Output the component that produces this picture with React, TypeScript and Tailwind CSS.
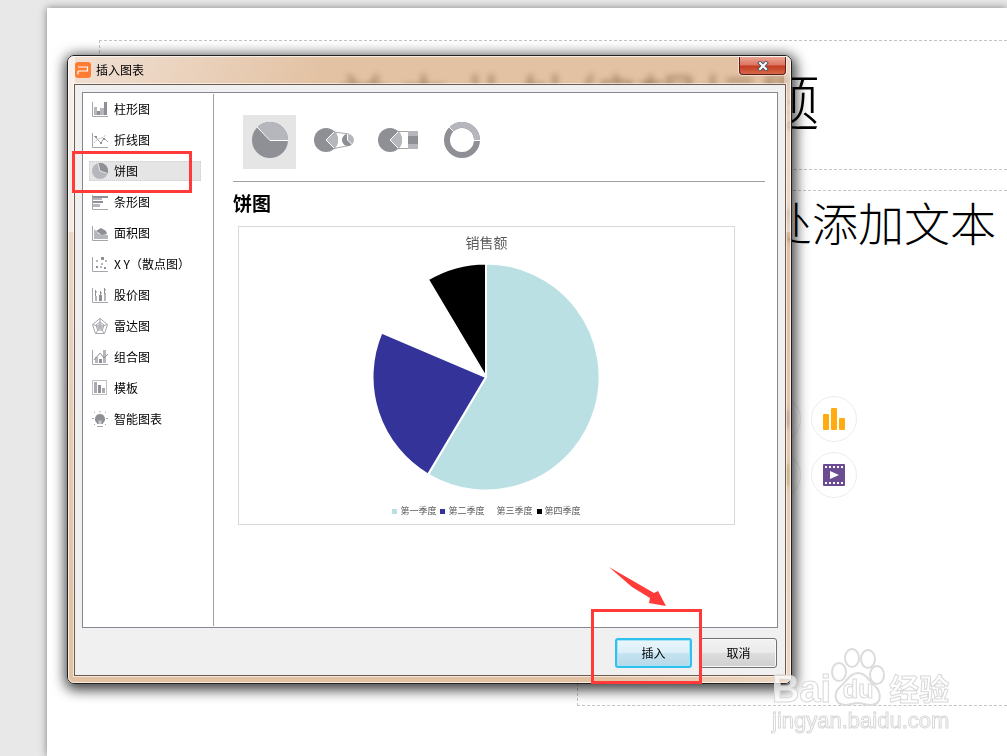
import React, { useState } from 'react';

const chartTypes = [
    { id: 'column', label: '柱形图' },
    { id: 'line', label: '折线图' },
    { id: 'pie', label: '饼图' },
    { id: 'bar', label: '条形图' },
    { id: 'area', label: '面积图' },
    { id: 'scatter', label: 'X Y（散点图）' },
    { id: 'stock', label: '股价图' },
    { id: 'radar', label: '雷达图' },
    { id: 'combo', label: '组合图' },
    { id: 'template', label: '模板' },
    { id: 'smart', label: '智能图表' },
];

const pieStyles = ['饼图', '复合饼图', '复合条饼图', '圆环图'];

const legend = [
    { name: '第一季度', color: 'bg-[#bbe0e3]' },
    { name: '第二季度', color: 'bg-[#333399]' },
    { name: '第三季度', color: 'bg-white' },
    { name: '第四季度', color: 'bg-black' },
];

const Axis = () => <path d="M.5 1v14.500H16" fill="none" stroke="#a5a6aa" />;

const TypeIcon = ({ id }: { id: string }) => (
    <svg width="16" height="16" viewBox="0 0 16 16" className="shrink-0" aria-hidden="true">
        {id === 'column' && (
            <>
                <path d="M2 6h3v8H2z" fill="#b6b7bc" />
                <path d="M5 10h3v4H5zM12 1h3v13h-3z" fill="#8f9095" />
                <path d="M8 7h4v7H8z" fill="#b6b7bc" />
                <Axis />
            </>
        )}
        {id === 'line' && (
            <>
                <path d="M2 4l7 7 3-5 4 4" fill="none" stroke="#a5a6aa" />
                <path d="M2 11l4-4 4-1 4-3" fill="none" stroke="#b6b7bc" strokeDasharray="2 1" />
                <path d="M8 10h2v2H8zM3 4h2v2H3zM11 6h2v2h-2z" fill="#8f9095" />
                <Axis />
            </>
        )}
        {id === 'pie' && (
            <>
                <circle cx="8" cy="8" r="8" fill="#b6b7bc" />
                <path d="M8 8L6 .2A8 8 0 0 1 15.500 11z" fill="#8f9095" />
                <path d="M6 .2L8 8l7.500 2.500" fill="none" stroke="#e6e6e6" />
            </>
        )}
        {id === 'bar' && (
            <>
                <path d="M1 2h15v2H1zM1 7h10v2H1z" fill="#8f9095" />
                <path d="M1 4h9v2H1zM1 10h7v3H1z" fill="#b6b7bc" />
                <Axis />
            </>
        )}
        {id === 'area' && (
            <>
                <path d="M2 4l5 5 9 1v4H2z" fill="#b6b7bc" />
                <path d="M4 6l5-3 5 3 1 3-5 1z" fill="#8f9095" />
                <Axis />
            </>
        )}
        {id === 'scatter' && (
            <>
                <path d="M9 1h3v3H9zM4 10h2v2H4zM12 11h2v2h-2z" fill="#8f9095" />
                <path d="M4 4h2v2H4zM13 4h2v2h-2zM9 7h2v2H9zM8 10h2v2H8z" fill="#b6b7bc" />
                <Axis />
            </>
        )}
        {id === 'stock' && (
            <>
                <path d="M3 9h2v5H3zM12 6h2v8h-2z" fill="#b6b7bc" />
                <path d="M7 8h3v6H7z" fill="#8f9095" />
                <path d="M3.500 3v6M8.500 4v4M12.500 1v6M3 5h2M8 6h2M12 3h2" stroke="#8f9095" />
                <Axis />
            </>
        )}
        {id === 'radar' && (
            <>
                <path d="M8 .5l7.500 6-3 9h-9l-3-9zM8 4l4 3-1.500 5h-5L4 7z" fill="none" stroke="#a5a6aa" />
                <path d="M8 0v9L1 6.500M8 9l7-2.500M8 9l4 6M8 9l-4 6" fill="none" stroke="#a5a6aa" />
                <path d="M8 5l3 3-1 3H6L5 8z" fill="#b6b7bc" />
            </>
        )}
        {id === 'combo' && (
            <>
                <path d="M3 8h3v6H3zM11 1h3v13h-3z" fill="#b6b7bc" />
                <path d="M7 10h3v4H7z" fill="#8f9095" />
                <path d="M2 11l6-7 4 5 4-4" fill="none" stroke="#8f9095" />
                <Axis />
            </>
        )}
        {id === 'template' && (
            <>
                <rect x=".5" y=".5" width="14" height="14" fill="none" stroke="#c0c1c5" />
                <path d="M2 2h3v11H2zM10 8h3v5h-3z" fill="#a9aaaf" />
                <path d="M6 5h3v8H6z" fill="#8f9095" />
            </>
        )}
        {id === 'smart' && (
            <>
                <path d="M8 3a5 5 0 0 1 3 9v1H5v-1a5 5 0 0 1 3-9z" fill="#8f9095" />
                <path d="M6.500 9l1.500 1 1.500-1v4h-3z" fill="#c9cace" />
                <path d="M5 15.500h6M8 0v1.500M2 1l1 1M14 1l-1 1M0 7.500h2M14 7.500h2M2 14l1-1M14 14l-1-1" stroke="#a5a6aa" />
            </>
        )}
    </svg>
);

const PieStyleIcon = ({ index }: { index: number }) => {
    if (index === 0) {
        return (
            <svg width="36" height="36" viewBox="0 0 36 36" aria-hidden="true">
                <circle cx="18" cy="18" r="18" fill="#8f9095" />
                <path d="M18 18L5.300 5.300A18 18 0 0 1 36 18z" fill="#b6b7bc" />
                <path d="M5 5l13 13.500h18" fill="none" stroke="#fff" />
            </svg>
        );
    }
    if (index === 3) {
        return (
            <svg width="36" height="36" viewBox="0 0 36 36" aria-hidden="true">
                <circle cx="18" cy="18" r="15" fill="none" stroke="#8f9095" strokeWidth="6" />
                <path d="M7.400 7.400A15 15 0 0 1 33 18" fill="none" stroke="#b6b7bc" strokeWidth="6" />
                <path d="M5 5l5 5M29 18.500h7" stroke="#fff" />
            </svg>
        );
    }
    return (
        <svg width="40" height="26" viewBox="0 0 40 26" aria-hidden="true">
            <circle cx="12" cy="13" r="12" fill="#8f9095" />
            <path d="M12 13l8.500-8.500a12 12 0 0 1 0 17z" fill="#b6b7bc" />
            <path d="M20 5l-8 8 8 8" fill="none" stroke="#fff" />
            {index === 1 ? (
                <>
                    <path d="M20 5l15 2M20 21.500l15-3" stroke="#a5a6aa" />
                    <circle cx="34" cy="13" r="6" fill="#b6b7bc" />
                    <path d="M33.500 7v6l4.500 4.500A6 6 0 1 1 33.500 7z" fill="#8f9095" />
                    <path d="M33.500 7v6l5 5" fill="none" stroke="#fff" />
                </>
            ) : (
                <>
                    <path d="M19 4.500h11M19 21.500h11" stroke="#a5a6aa" />
                    <path d="M30 4h10v18H30z" fill="#b6b7bc" />
                    <path d="M30 9h10v8H30z" fill="#8f9095" />
                </>
            )}
        </svg>
    );
};

const InsertIcon = ({ kind }: { kind: string }) => (
    <svg width="22" height="22" viewBox="0 0 22 22" aria-hidden="true">
        {kind === '图表' && (
            <>
                <rect x="0" y="6" width="6" height="16" rx="1" fill="#ffab12" />
                <rect x="8" y="0" width="6" height="22" rx="1" fill="#ffab12" />
                <rect x="16" y="10" width="6" height="12" rx="1" fill="#ffab12" />
            </>
        )}
        {kind === '视频' && (
            <>
                <rect width="22" height="22" rx="1" fill="#6b4c93" />
                <path d="M2 3h18M2 19h18" stroke="#fff" strokeWidth="2" strokeDasharray="2 2" />
                <path d="M7 7l9 4-9 4z" fill="#fff" />
            </>
        )}
        {kind === '表格' && <path d="M0 2h22v18H0z" fill="#8a86b0" />}
        {kind === '图片' && <path d="M0 0h22v22H0z" fill="#8fa860" />}
    </svg>
);

const PieChart = () => (
    <svg width="228" height="228" viewBox="-113 -114 228 228" role="img" aria-label="销售额">
        <g stroke="#fff" strokeWidth="2" strokeLinejoin="round">
            <path d="M0 0V-113.500A113.500 113.500 0 1 1 -58 97.500z" fill="#bbe0e3" />
            <path d="M0 0L-58 97.500A113.500 113.500 0 0 1 -104.500 -44.300z" fill="#333399" />
            <path d="M0 0L-58 -97.500A113.500 113.500 0 0 1 0 -113.500z" fill="#000" />
        </g>
    </svg>
);

const Watermark = () => (
    <div className="absolute left-[772px] top-[645px] font-['Liberation_Sans','Noto_Sans_CJK_SC',sans-serif] text-white/70 [-webkit-text-stroke:1px_#d8d8d8]">
        <div className="flex h-[62px] items-end font-bold">
            <span className="text-[38px] leading-[36px]">Bai</span>
            <span className="relative flex h-[60px] w-[54px] items-end justify-center">
                <svg width="54" height="60" viewBox="0 0 54 60" className="absolute inset-0" fill="#fff" fillOpacity=".7" stroke="#dcdcdc" strokeWidth="2" aria-hidden="true">
                    <ellipse cx="8" cy="25" rx="7" ry="9" />
                    <ellipse cx="21" cy="11" rx="7" ry="9" />
                    <ellipse cx="37" cy="12" rx="7" ry="9" />
                    <ellipse cx="46" cy="28" rx="7" ry="9" />
                    <path d="M27 26c8 0 11 8 17 13 6 6 8 18-4 19-6 0-8-2-13-2s-8 2-13 2C2 57 3 45 9 40c7-6 10-14 18-14z" />
                </svg>
                <span className="relative text-[25px] leading-9">du</span>
            </span>
            <span className="ml-1 text-[30px] leading-[34px]">经验</span>
        </div>
        <div className="text-[22px] leading-7">jingyan.baidu.com</div>
    </div>
);

const Slide = () => (
    <div className="min-h-screen bg-[#e8e8e8] pl-[47px] pt-2">
        <main className="min-h-[748px] overflow-hidden bg-white pb-[50px] pt-8 shadow-[0_0_8px_rgba(0,0,0,0.45)]">
            <h1 className="ml-[52px] whitespace-nowrap border-y border-l border-dashed border-[#c4c4c4] pb-[10px] pl-[232px] text-[61px] leading-[118px]">
                单击此处编辑标题
            </h1>
            <section className="ml-[530px] mt-5 border-y border-l border-dashed border-[#c4c4c4] pb-[207px]">
                <p className="whitespace-nowrap pl-[188px] text-[46px] leading-[60px]">处添加文本</p>
                <div className="ml-[177px] mt-[145px] grid w-[102px] grid-cols-2 gap-[10px]">
                    {['表格', '图表', '图片', '视频'].map((kind) => (
                        <button
                            key={kind}
                            type="button"
                            aria-label={kind}
                            className="flex size-[46px] items-center justify-center rounded-full border border-[#ececec] bg-white"
                        >
                            <InsertIcon kind={kind} />
                        </button>
                    ))}
                </div>
            </section>
        </main>
    </div>
);

const App = () => {
    const [selectedType, setSelectedType] = useState('pie');
    const [selectedStyle, setSelectedStyle] = useState(0);

    return (
        <div className="relative overflow-hidden font-['Noto_Sans_CJK_SC',sans-serif] text-black">
            <div className="font-light">
                <Slide />
            </div>

            <div
                role="dialog"
                aria-labelledby="dialog-title"
                className="absolute left-[67px] right-[215px] top-[55px] rounded-[7px] border border-[#222] shadow-[1px_3px_13px_3px_rgba(0,0,0,0.75)] backdrop-blur-[3px] [background:linear-gradient(#ffffff80,#ffffff80)_left_top/7px_176px_no-repeat,linear-gradient(#ffffff60,#ffffff60)_right_top/7px_176px_no-repeat,linear-gradient(115deg,#e9d2bfaa_0,#d5a375aa_26%,#d5a375aa_82%,#e6c6a8aa_100%)]"
            >
                <div className="rounded-md border border-white/70 pb-[6px] pl-[5px] pr-1">
                    <header className="flex h-[27px] items-start justify-between">
                        <div className="flex items-center gap-[5px] pl-px pt-[3px]">
                            <svg width="16" height="16" viewBox="0 0 16 16" aria-hidden="true">
                                <rect width="16" height="16" rx="3" fill="#ff7c32" />
                                <path d="M3 9v3.500M3 5h9.500v4H3" fill="none" stroke="#fff" strokeWidth="1.200" />
                            </svg>
                            <h2 id="dialog-title" className="text-xs leading-5">插入图表</h2>
                        </div>
                        <button
                            type="button"
                            aria-label="关闭"
                            className="flex h-[18px] w-[47px] items-center justify-center rounded-b-[4px] border border-t-0 border-[#5c1f1b] bg-[linear-gradient(#eba493_0,#dd7361_48%,#c23a1f_52%,#d8684a_100%)] shadow-[0_0_0_1px_rgba(255,255,255,0.5)]"
                        >
                            <svg width="12" height="10" viewBox="0 0 12 10" aria-hidden="true">
                                <path d="M3 2l6 6M9 2l-6 6" stroke="#535666" strokeWidth="4" strokeLinecap="square" />
                                <path d="M3 2l6 6M9 2l-6 6" stroke="#fff" strokeWidth="2" strokeLinecap="square" />
                            </svg>
                        </button>
                    </header>

                    <div className="border border-[#6d5b52] bg-[#f0f0f0] p-[7px] shadow-[0_0_0_1px_rgba(255,255,255,0.6)]">
                        <div className="flex border border-[#828790] bg-white py-px">
                            <nav className="w-[131px] shrink-0 border-r border-[#a0a0a0] pl-[6px] pt-[5px]">
                                <ul className="flex flex-col gap-[11px]">
                                    {chartTypes.map((type) => (
                                        <li key={type.id} className="relative">
                                            <button
                                                type="button"
                                                onClick={() => setSelectedType(type.id)}
                                                className={
                                                    type.id === selectedType
                                                        ? 'flex h-5 w-28 items-center gap-[6px] border border-dotted border-[#cfcfcf] bg-[#e5e5e5] pl-[2px] text-xs'
                                                        : 'flex h-5 w-28 items-center gap-[6px] border border-transparent pl-[2px] text-xs'
                                                }
                                            >
                                                <TypeIcon id={type.id} />
                                                <span className="whitespace-nowrap">{type.label}</span>
                                            </button>
                                            {type.id === 'pie' && (
                                                <div className="pointer-events-none absolute -left-[17px] -top-[10px] h-[42px] w-[120px] border-[3px] border-[#ff3a38]" />
                                            )}
                                        </li>
                                    ))}
                                </ul>
                            </nav>

                            <section className="min-w-0 flex-1 pb-[101px] pl-[19px] pr-3 pt-[21px]">
                                <div className="flex gap-[11px] border-b border-[#a0a0a0] pb-3 pl-[10px]">
                                    {pieStyles.map((name, index) => (
                                        <button
                                            key={name}
                                            type="button"
                                            aria-label={name}
                                            onClick={() => setSelectedStyle(index)}
                                            className={
                                                index === selectedStyle
                                                    ? 'flex h-[54px] w-[53px] items-center justify-center bg-[#e5e5e5] pb-1'
                                                    : 'flex h-[54px] w-[53px] items-center justify-center pb-1'
                                            }
                                        >
                                            <PieStyleIcon index={index} />
                                        </button>
                                    ))}
                                </div>
                                <h3 className="mt-[7px] text-[19px] font-bold leading-7">饼图</h3>
                                <figure className="ml-[5px] mr-[30px] mt-[9px] flex flex-col items-center border border-[#d9d9d9] pb-[5px]">
                                    <figcaption className="pt-[3px] text-sm leading-6 text-[#595959]">销售额</figcaption>
                                    <div className="mt-[9px]">
                                        <PieChart />
                                    </div>
                                    <ul className="mt-3 flex gap-1 text-[9px] leading-4 text-[#595959]">
                                        {legend.map((item) => (
                                            <li key={item.name} className="flex items-center gap-[3px]">
                                                <span className={`size-[5px] ${item.color}`} />
                                                {item.name}
                                            </li>
                                        ))}
                                    </ul>
                                </figure>
                            </section>
                        </div>

                        <footer className="mt-[10px] flex justify-end gap-2 pr-px">
                            <div className="relative">
                                <button
                                    type="button"
                                    className="h-[30px] w-[77px] rounded-[3px] border-2 border-[#2fc0ee] bg-[linear-gradient(#eaf6fb_0,#dceff8_48%,#c5e3f1_52%,#b7d8e8_100%)] text-xs shadow-[inset_0_0_0_1px_#a5e3f7]"
                                >
                                    插入
                                </button>
                                <div className="pointer-events-none absolute -left-6 -top-[29px] h-[75px] w-[111px] border-[3px] border-[#ff3a38]" />
                                <svg
                                    width="60"
                                    height="42"
                                    viewBox="0 0 60 42"
                                    className="pointer-events-none absolute -left-[7px] -top-[72px]"
                                    aria-hidden="true"
                                >
                                    <path d="M1 1L46 27l4-2 8 15-17-3 1-5L24 21z" fill="#ff3a38" />
                                </svg>
                            </div>
                            <button
                                type="button"
                                className="h-[30px] w-[77px] rounded-[3px] border border-[#707070] bg-[linear-gradient(#f2f2f2_0,#ebebeb_48%,#dddddd_52%,#cfcfcf_100%)] text-xs shadow-[inset_0_0_0_1px_#fafafa]"
                            >
                                取消
                            </button>
                        </footer>
                    </div>
                </div>
            </div>

            <Watermark />
        </div>
    );
};

export default App;
